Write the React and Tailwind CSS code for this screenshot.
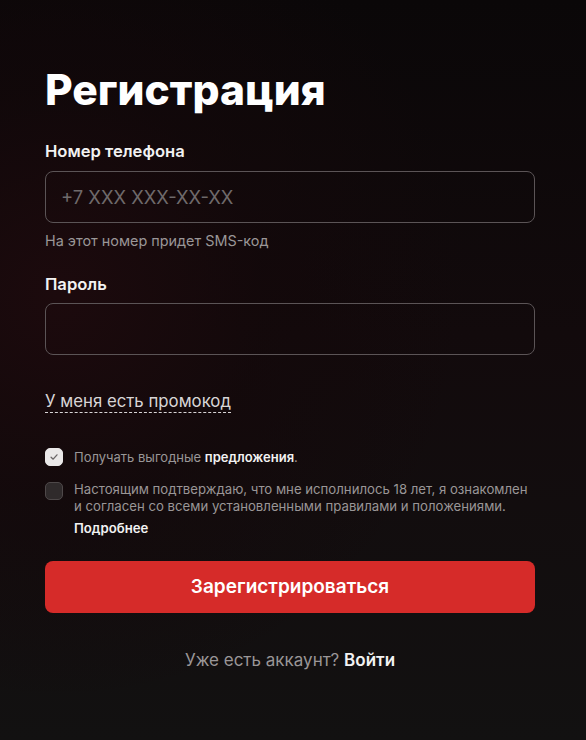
import React from 'react'

export default function App() {
    const [offers, setOffers] = React.useState(true)
    const [adult, setAdult] = React.useState(false)

    return (
        <div
            className="min-h-[740px] w-full bg-[#0c0a0a] bg-[radial-gradient(ellipse_70%_55%_at_10%_40%,#1c0a0d_0%,rgba(20,8,10,0.6)_50%,transparent_100%),linear-gradient(180deg,#0a0708_0%,#120a0c_45%,#121111_100%)] pl-[45px] pr-[51px] pt-[66px] text-white"
            style={{ fontFamily: 'Inter, "Noto Sans", sans-serif' }}
        >
            <h1 className="text-[42.5px] font-extrabold leading-[48px]">Регистрация</h1>

            {/* Phone */}
            <div className="mt-[27px]">
                <label className="block text-[16.6px] font-semibold leading-5 text-[#f2f2f2]">Номер телефона</label>
                <input
                    type="tel"
                    placeholder="+7 XXX XXX-XX-XX"
                    className="mt-[10px] h-[52px] w-full rounded-lg border border-[#5b5456] bg-transparent px-[15px] text-[18.4px] text-white outline-none placeholder:text-[#6f6a6b]"
                />
                <p className="mt-[8px] text-[14.4px] leading-5 text-[#9a9697]">На этот номер придет SMS-код</p>
            </div>

            {/* Password */}
            <div className="mt-[23px]">
                <label className="block text-[16.6px] font-semibold leading-5 text-[#f2f2f2]">Пароль</label>
                <input
                    type="password"
                    className="mt-[9px] h-[52px] w-full rounded-lg border border-[#5b5456] bg-transparent px-[15px] text-[20px] text-white outline-none"
                />
            </div>

            <div className="mt-[34px]">
                <span className="border-b border-dashed border-[#d8d5d6] pb-[1px] text-[16.8px] leading-5 text-[#d8d5d6]">
                    У меня есть промокод
                </span>
            </div>

            {/* Checkboxes */}
            <div className="mt-[34px] flex flex-col gap-[14px]">
                <label className="flex cursor-pointer items-start gap-[11px]" onClick={() => setOffers(!offers)}>
                    <span className={`mt-[1px] flex h-[18px] w-[18px] shrink-0 items-center justify-center rounded-[5px] border ${offers ? 'border-[#eae8e8] bg-[#eae8e8]' : 'border-[#5b5456] bg-[#2f2a2b]'}`}>
                        {offers && (
                            <svg width="10" height="10" viewBox="0 0 12 12" fill="none">
                                <path d="M2.5 6.3 L5 8.6 L9.6 3.4" stroke="#6b6768" strokeWidth="1.6" strokeLinecap="round" strokeLinejoin="round" />
                            </svg>
                        )}
                    </span>
                    <span className="text-[13px] leading-5 text-[#9a9697]">
                        Получать выгодные <span className="font-semibold text-[#f2f2f2]">предложения</span>.
                    </span>
                </label>

                <label className="flex cursor-pointer items-start gap-[11px]" onClick={() => setAdult(!adult)}>
                    <span className={`mt-[1px] flex h-[18px] w-[18px] shrink-0 items-center justify-center rounded-[5px] border ${adult ? 'border-[#eae8e8] bg-[#eae8e8]' : 'border-[#4e4849] bg-[#2f2a2b]'}`}>
                        {adult && (
                            <svg width="10" height="10" viewBox="0 0 12 12" fill="none">
                                <path d="M2.5 6.3 L5 8.6 L9.6 3.4" stroke="#6b6768" strokeWidth="1.6" strokeLinecap="round" strokeLinejoin="round" />
                            </svg>
                        )}
                    </span>
                    <span className="pr-[6px] text-[13.2px] leading-[17px] text-[#9a9697]">
                        Настоящим подтверждаю, что мне исполнилось 18 лет, я ознакомлен и согласен со всеми установленными правилами и положениями.
                        <span className="mt-[5px] block font-semibold text-[#f2f2f2]">Подробнее</span>
                    </span>
                </label>
            </div>

            <button className="mt-[24px] h-[52px] w-full rounded-lg bg-[#d62b29] text-[19px] font-semibold text-white">
                Зарегистрироваться
            </button>

            <p className="mt-[37px] text-center text-[17px] leading-5 text-[#9a9697]">
                Уже есть аккаунт? <span className="font-semibold text-[#f2f2f2]">Войти</span>
            </p>
        </div>
    )
}
